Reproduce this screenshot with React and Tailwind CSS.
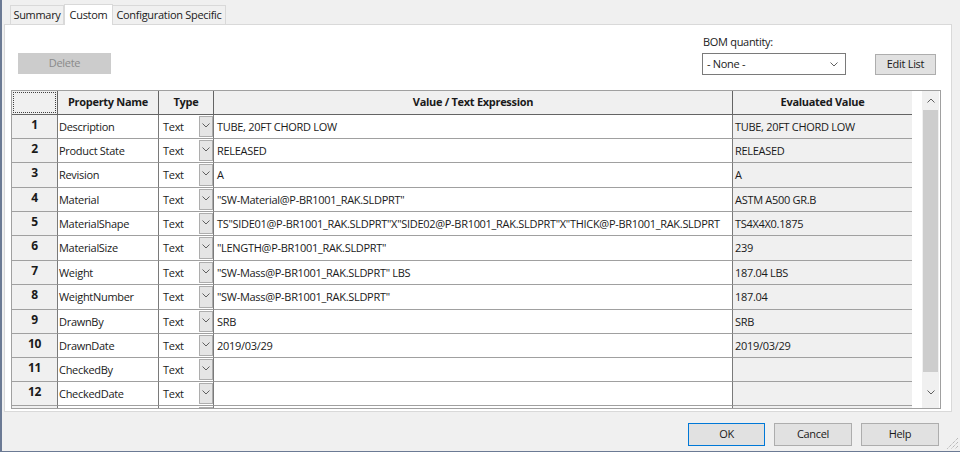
import React from "react";

const rows = [
  { n: 1, name: "Description", val: "TUBE, 20FT CHORD LOW", ev: "TUBE, 20FT CHORD LOW", h: "h-[24px]" },
  { n: 2, name: "Product State", val: "RELEASED", ev: "RELEASED", h: "h-[24px]" },
  { n: 3, name: "Revision", val: "A", ev: "A", h: "h-[25px]" },
  { n: 4, name: "Material", val: "\"SW-Material@P-BR1001_RAK.SLDPRT\"", ev: "ASTM A500 GR.B", h: "h-[24px]" },
  { n: 5, name: "MaterialShape", val: "TS\"SIDE01@P-BR1001_RAK.SLDPRT\"X\"SIDE02@P-BR1001_RAK.SLDPRT\"X\"THICK@P-BR1001_RAK.SLDPRT", ev: "TS4X4X0.1875", h: "h-[24px]" },
  { n: 6, name: "MaterialSize", val: "\"LENGTH@P-BR1001_RAK.SLDPRT\"", ev: "239", h: "h-[25px]" },
  { n: 7, name: "Weight", val: "\"SW-Mass@P-BR1001_RAK.SLDPRT\" LBS", ev: "187.04 LBS", h: "h-[24px]" },
  { n: 8, name: "WeightNumber", val: "\"SW-Mass@P-BR1001_RAK.SLDPRT\"", ev: "187.04", h: "h-[25px]" },
  { n: 9, name: "DrawnBy", val: "SRB", ev: "SRB", h: "h-[24px]" },
  { n: 10, name: "DrawnDate", val: "2019/03/29", ev: "2019/03/29", h: "h-[24px]" },
  { n: 11, name: "CheckedBy", val: "", ev: "", h: "h-[24px]" },
  { n: 12, name: "CheckedDate", val: "", ev: "", h: "h-[24px]" },
  { n: "", name: "", val: "", ev: "", h: "h-[24px]", empty: true },
];

function Chevron({ className = "" }) {
  return (
    <svg width="8" height="5" viewBox="0 0 8 5" className={className}>
      <path d="M0.5 0.5 L4 4 L7.5 0.5" fill="none" stroke="#606060" strokeWidth="1" />
    </svg>
  );
}

function Row({ r }) {
  return (
    <div className={`flex ${r.h} shrink-0`}>
      <div className="w-[46px] shrink-0 bg-[#f0f0f0] border-r border-b border-r-[#7a7a7a] border-b-[#a0a0a0] flex justify-center pt-[2px] font-bold text-[12px] leading-[16px]">
        {r.n}
      </div>
      <div className="w-[101px] shrink-0 border-r border-b border-r-[#7a7a7a] border-b-[#a0a0a0] flex items-center pl-[1px] pt-[1px] whitespace-nowrap overflow-hidden">
        {r.name}
      </div>
      <div className="w-[55px] shrink-0 border-r border-b border-r-[#7a7a7a] border-b-[#a0a0a0] flex">
        <div className="w-[40px] flex items-center pl-[4px] pt-[1px]">{r.empty ? "" : "Text"}</div>
        <div className="w-[14px] bg-[#e5e5e5] border border-[#adadad] my-[1px] flex justify-center pt-[6px]">
          <Chevron />
        </div>
      </div>
      <div className="w-[519px] shrink-0 border-r border-b border-r-[#7a7a7a] border-b-[#a0a0a0] flex items-center pl-[3px] pt-[1px] whitespace-nowrap overflow-hidden">
        {r.val}
      </div>
      <div className="w-[180px] shrink-0 bg-[#f0f0f0] border-r border-b border-r-[#7a7a7a] border-b-[#a0a0a0] flex items-center pl-[2px] pt-[1px] whitespace-nowrap overflow-hidden">
        {r.ev}
      </div>
    </div>
  );
}

export default function App() {
  return (
    <div className="w-[960px] h-[452px] bg-[#f0f0f0] border-l-2 border-b border-[#6b7a94] flex flex-col font-['Open_Sans',sans-serif] text-[11px] tracking-[-0.3px] text-[#1a1a1a] overflow-hidden relative">
      {/* tabs */}
      <div className="h-[24px] flex items-end pl-[8px] shrink-0">
        <div className="w-[54px] h-[19px] bg-[#f0f0f0] border border-b-0 border-[#d9d9d9] flex items-center justify-center">Summary</div>
        <div className="w-[49px] h-[21px] bg-white border border-b-0 border-[#d9d9d9] flex items-center justify-center -mb-px relative z-10">Custom</div>
        <div className="w-[113px] h-[19px] bg-[#f0f0f0] border border-b-0 border-l-0 border-[#d9d9d9] flex items-center justify-center">Configuration Specific</div>
      </div>
      {/* panel */}
      <div className="ml-[2px] w-[948px] h-[388px] bg-white border border-[#d9d9d9] flex flex-col shrink-0">
        <div className="h-[65px] flex justify-between shrink-0">
          <div className="pl-[13px] pt-[28px]">
            <div className="w-[93px] h-[21px] bg-[#cccccc] text-[#8a8a8a] flex items-center justify-center">Delete</div>
          </div>
          <div className="flex pt-[7px] pr-[15px]">
            <div className="flex flex-col">
              <div className="h-[21px] pl-[1px] flex items-center">BOM quantity:</div>
              <div className="w-[144px] h-[22px] border border-[#7a7a7a] flex items-center justify-between pl-[4px] pr-[7px]">
                <span>- None -</span>
                <Chevron />
              </div>
            </div>
            <div className="ml-[29px] mt-[22px] w-[61px] h-[21px] bg-[#e1e1e1] border border-[#adadad] flex items-center justify-center">Edit List</div>
          </div>
        </div>
        {/* table */}
        <div className="ml-[6px] w-[930px] h-[319px] border border-[#a0a0a0] flex overflow-hidden shrink-0">
          <div className="w-[901px] flex flex-col overflow-hidden">
            <div className="flex h-[24px] shrink-0 bg-[#f0f0f0] font-bold">
              <div className="w-[46px] shrink-0 border-r border-b border-[#646464] p-[1px]">
                <div className="w-full h-full border border-dotted border-[#404040]" />
              </div>
              <div className="w-[101px] shrink-0 border-r border-b border-[#646464] flex items-center justify-center">Property Name</div>
              <div className="w-[55px] shrink-0 border-r border-b border-[#646464] flex items-center justify-center">Type</div>
              <div className="w-[519px] shrink-0 border-r border-b border-[#646464] flex items-center justify-center">Value / Text Expression</div>
              <div className="w-[180px] shrink-0 border-r border-b border-[#646464] flex items-center justify-center">Evaluated Value</div>
            </div>
            {rows.map((r, i) => (
              <Row key={i} r={r} />
            ))}
          </div>
          <div className="w-[10px] shrink-0" />
          <div className="w-[17px] shrink-0 bg-[#f0f0f0] flex flex-col items-center">
            <div className="h-[19px] flex items-center justify-center">
              <Chevron className="rotate-180" />
            </div>
            <div className="w-[15px] h-[262px] bg-[#cdcdcd]" />
            <div className="flex-1" />
            <div className="h-[20px] flex items-center justify-center mb-[6px]">
              <Chevron />
            </div>
          </div>
          <div className="w-[1px] shrink-0" />
        </div>
      </div>
      {/* buttons */}
      <div className="flex justify-end gap-[9px] pr-[21px] pt-[11px]">
        <div className="w-[77px] h-[23px] bg-[#e1e1e1] border border-[#0078d7] flex items-center justify-center">OK</div>
        <div className="w-[78px] h-[23px] bg-[#e1e1e1] border border-[#adadad] flex items-center justify-center">Cancel</div>
        <div className="w-[78px] h-[23px] bg-[#e1e1e1] border border-[#adadad] flex items-center justify-center">Help</div>
      </div>
      <svg width="14" height="14" viewBox="0 0 14 14" className="absolute right-[1px] bottom-[1px]">
        <path d="M13 2 L2 13 M13 6 L6 13 M13 10 L10 13" stroke="#a0a0a0" strokeWidth="1" strokeDasharray="1 1" />
      </svg>
    </div>
  );
}
